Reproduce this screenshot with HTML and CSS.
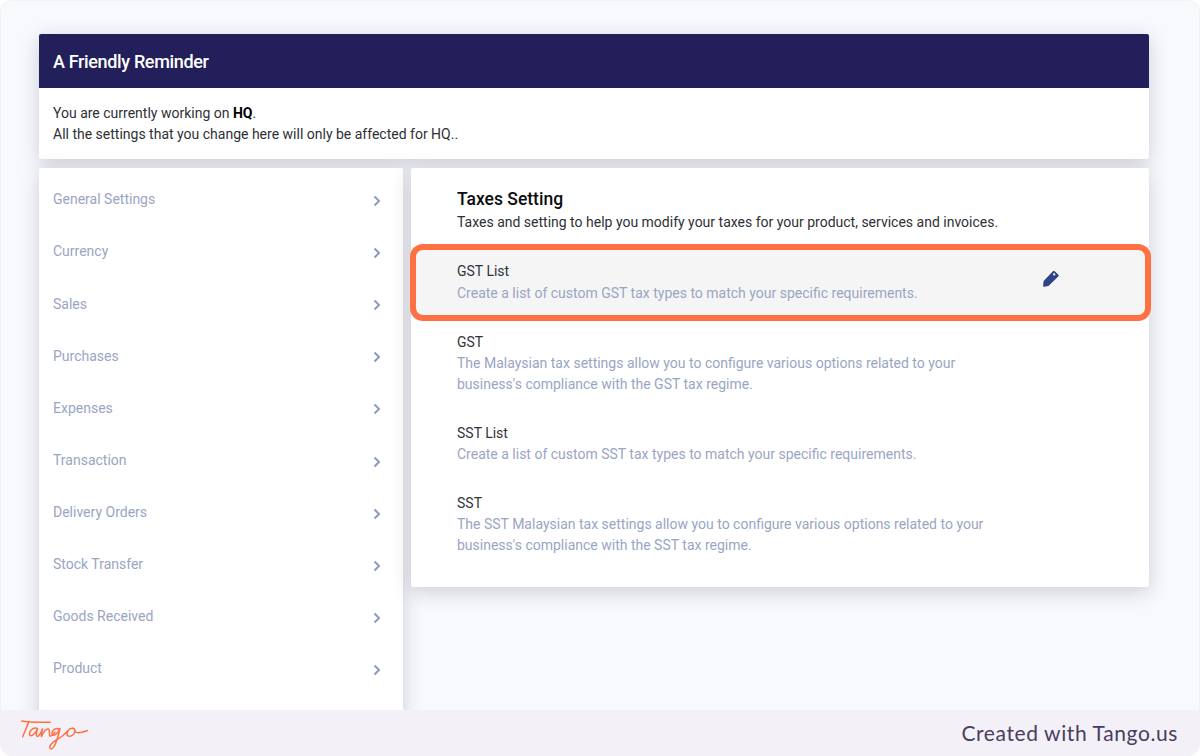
FILE: index.html
```html
<!DOCTYPE html>
<html lang="en">
<head>
<meta charset="utf-8">
<title>Taxes Setting</title>
<link rel="stylesheet" href="styles.css">
</head>
<body>
<div class="frame">
  <div class="content">
    <section class="reminder">
      <h1 class="reminder-head">A Friendly Reminder</h1>
      <div class="reminder-body">
        <p>You are currently working on <b>HQ</b>.</p>
        <p>All the settings that you change here will only be affected for HQ..</p>
      </div>
    </section>
    <div class="columns">
      <nav class="side">
        <a class="side-row"><span>General Settings</span><svg class="chev" viewBox="0 0 8 12"><path d="M1.5 1.5 6 6l-4.500 4.500"/></svg></a>
        <a class="side-row"><span>Currency</span><svg class="chev" viewBox="0 0 8 12"><path d="M1.5 1.5 6 6l-4.500 4.500"/></svg></a>
        <a class="side-row"><span>Sales</span><svg class="chev" viewBox="0 0 8 12"><path d="M1.5 1.5 6 6l-4.500 4.500"/></svg></a>
        <a class="side-row"><span>Purchases</span><svg class="chev" viewBox="0 0 8 12"><path d="M1.5 1.5 6 6l-4.500 4.500"/></svg></a>
        <a class="side-row"><span>Expenses</span><svg class="chev" viewBox="0 0 8 12"><path d="M1.5 1.5 6 6l-4.500 4.500"/></svg></a>
        <a class="side-row"><span>Transaction</span><svg class="chev" viewBox="0 0 8 12"><path d="M1.5 1.5 6 6l-4.500 4.500"/></svg></a>
        <a class="side-row"><span>Delivery Orders</span><svg class="chev" viewBox="0 0 8 12"><path d="M1.5 1.5 6 6l-4.500 4.500"/></svg></a>
        <a class="side-row"><span>Stock Transfer</span><svg class="chev" viewBox="0 0 8 12"><path d="M1.5 1.5 6 6l-4.500 4.500"/></svg></a>
        <a class="side-row"><span>Goods Received</span><svg class="chev" viewBox="0 0 8 12"><path d="M1.5 1.5 6 6l-4.500 4.500"/></svg></a>
        <a class="side-row"><span>Product</span><svg class="chev" viewBox="0 0 8 12"><path d="M1.5 1.5 6 6l-4.500 4.500"/></svg></a>
      </nav>
      <main class="panel">
        <header class="panel-head">
          <h2>Taxes Setting</h2>
          <p>Taxes and setting to help you modify your taxes for your product, services and invoices.</p>
        </header>
        <div class="item item-active">
          <div class="item-text">
            <h3>GST List</h3>
            <p>Create a list of custom GST tax types to match your specific requirements.</p>
          </div>
          <svg class="pencil" viewBox="0 0 17 17"><path d="M10 1.200a1.500 1.500 0 0 1 2.100-.1l3.500 3.200a1.500 1.500 0 0 1 .1 2.100L6.200 15.800a1 1 0 0 1-.6.3L1 16.900a.8.8 0 0 1-.9-.9L.6 11.500a1 1 0 0 1 .3-.6zM10.600 3.300a1.100 1.100 0 0 0 0 1.500l.5.5a1.100 1.100 0 0 0 1.500-1.500l-.5-.5a1.100 1.100 0 0 0-1.500 0z" fill-rule="evenodd"/></svg>
          <div class="highlight"></div>
        </div>
        <div class="item">
          <div class="item-text">
            <h3>GST</h3>
            <p>The Malaysian tax settings allow you to configure various options related to your business's compliance with the GST tax regime.</p>
          </div>
        </div>
        <div class="item">
          <div class="item-text">
            <h3>SST List</h3>
            <p>Create a list of custom SST tax types to match your specific requirements.</p>
          </div>
        </div>
        <div class="item">
          <div class="item-text">
            <h3>SST</h3>
            <p>The SST Malaysian tax settings allow you to configure various options related to your business's compliance with the SST tax regime.</p>
          </div>
        </div>
      </main>
    </div>
  </div>
  <footer class="foot">
    <svg class="logo" viewBox="0 0 68 32" role="img" aria-label="Tango"><path d="M.7 2C8 3.500 18 3.500 29 3.300M7.500 3.300C6 8 3.500 13 1.700 17.700M16.500 9.500C13 8 8.500 11 8.500 15 8.500 18.500 13 17 16.500 10 15.500 13 14.500 17 16.500 17.500 18.500 17.500 20 13 21.500 10 21 12.500 20 15.500 20.500 17.500 22 14 25 9.500 27.500 10 29.500 10.500 27.500 15 29 17 30.500 18 32 15.500 34 13M38 10C35 8.500 31 11 31 14.500 31 18 36 16.500 39 9.500 37.500 16 35.500 24 33 27.500 31 31 28 30.500 29 27 30 23 36 21 40 18 43 16 45 13.500 46.500 12M51.500 9.300C47.500 9 45 14 46.500 16.500 48.500 18.500 53.500 16 54 12.500 54.300 10 52.500 9 51 9.500M53.500 12.500C55.500 14.500 60 14 66.500 11.500"/></svg>
    <span class="credit">Created with Tango.us</span>
  </footer>
</div>
</body>
</html>
```
FILE: styles.css
```css
* { box-sizing: border-box; }
html, body { margin: 0; padding: 0; background: #fff; }
body { font-family: Roboto, "Liberation Sans", sans-serif; }
h1, h2, h3, p { margin: 0; font-weight: 400; }

.frame {
  position: relative;
  width: 1200px;
  height: 756px;
  overflow: hidden;
  background: #f8f9fd;
  border: 1px solid #f3f1f7;
  border-bottom: 0;
  border-radius: 12px;
}
.content { padding: 33px 50px 0 38px; }

.reminder {
  width: 1110px;
  height: 125px;
  background: #fff;
  border-radius: 2px;
  box-shadow: 0 5px 20px rgba(40, 42, 60, .2);
}
.reminder-head {
  height: 54px;
  padding-left: 14px;
  background: #221f5b;
  color: #fff;
  font-size: 18px;
  font-weight: 500;
  letter-spacing: -.35px;
  line-height: 55px;
  border-radius: 2px 2px 0 0;
}
.reminder-body {
  padding: 14.500px 14px;
  color: #2f3036;
  font-size: 14px;
  line-height: 21.300px;
}
.reminder-body b { color: #000; font-weight: 700; }

.columns { display: flex; align-items: flex-start; gap: 8px; margin-top: 9px; }

.side {
  width: 364px;
  height: 600px;
  padding-top: 6.300px;
  background: #fff;
  border-radius: 2px;
  box-shadow: 0 5px 20px rgba(40, 42, 60, .2);
}
.side-row {
  display: flex;
  align-items: center;
  justify-content: space-between;
  height: 52.100px;
  padding: 0 22px 2px 14px;
  color: #9aa5c4;
  font-size: 14px;
}
.chev { width: 8px; height: 12px; margin-top: 3.500px; fill: none; stroke: #8e9ac2; stroke-width: 2; }

.panel {
  width: 738px;
  height: 419px;
  background: #fff;
  border-radius: 2px;
  box-shadow: 0 5px 20px rgba(40, 42, 60, .2);
}
.panel-head { height: 79.400px; padding: 20px 46px 0; }
.panel-head h2 { color: #0c0c10; font-size: 17.500px; font-weight: 500; line-height: 22px; }
.panel-head p { margin-top: 1px; color: #2f3036; font-size: 14px; line-height: 22px; }

.item { position: relative; padding: 14px 46px; }
.item-text { width: 546px; }
.item h3 { color: #33343a; font-size: 14px; line-height: 20px; }
.item p { color: #9aa5c4; font-size: 14px; line-height: 21px; margin-top: 1.150px; }
.item-active { background: #f5f5f5; }
.pencil { position: absolute; left: 632px; top: 23px; width: 16.500px; height: 17px; fill: #2f4487; }
.highlight {
  position: absolute;
  left: -1px;
  top: -3.500px;
  width: 741px;
  height: 77px;
  border: 6px solid #ff7043;
  border-radius: 13px;
}

.foot {
  position: absolute;
  left: 0;
  right: 0;
  bottom: 0;
  display: flex;
  align-items: center;
  justify-content: space-between;
  height: 46px;
  padding: 0 21px 0 20px;
  background: #f3f1f7;
}
.logo { width: 68px; height: 32px; margin-top: 4px; fill: none; stroke: #ff7043; stroke-width: 1.500; stroke-linecap: round; stroke-linejoin: round; }
.credit { margin-top: -2px; color: #4a3d62; font-family: Lato, sans-serif; font-size: 21px; letter-spacing: .6px; }
```
